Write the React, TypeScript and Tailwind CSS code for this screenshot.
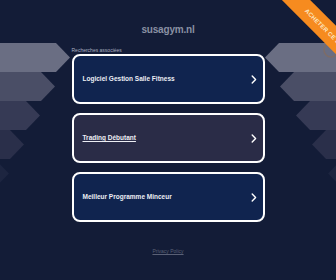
import React from "react";

const Chevron = () => (
  <svg width="6" height="9" viewBox="0 0 6 9" fill="none">
    <path d="M1.2 1 L4.6 4.5 L1.2 8" stroke="#ffffff" strokeWidth="1.4" strokeLinecap="round" strokeLinejoin="round" />
  </svg>
);

const cards = [
  { label: "Logiciel Gestion Salle Fitness", bg: "bg-[#10244f]", underline: false },
  { label: "Trading Débutant", bg: "bg-[#2a2c47]", underline: true },
  { label: "Meilleur Programme Minceur", bg: "bg-[#10244f]", underline: false },
];

export default function App() {
  const leftShapes = [
    { y: 43, tip: 70, c: "#6a6e83" },
    { y: 72, tip: 55, c: "#4a4e66" },
    { y: 101, tip: 40, c: "#363a55" },
    { y: 130, tip: 24, c: "#2a2f4a" },
    { y: 159, tip: 9, c: "#1d2540" },
  ];
  const rightShapes = [
    { y: 43, tip: 265, c: "#6a6e83" },
    { y: 72, tip: 280, c: "#4a4e66" },
    { y: 101, tip: 296, c: "#363a55" },
    { y: 130, tip: 312, c: "#2a2f4a" },
    { y: 159, tip: 328, c: "#1d2540" },
  ];
  const h = 29;
  return (
    <div
      className="relative w-[336px] h-[280px] overflow-hidden bg-[#131c37]"
      style={{ fontFamily: '"Liberation Sans", Arial, sans-serif' }}
    >
      <svg className="absolute left-0 top-0" width="336" height="280" viewBox="0 0 336 280">
        {leftShapes.map((s, i) => (
          <polygon
            key={"l" + i}
            points={`0,${s.y} ${s.tip - 14},${s.y} ${s.tip},${s.y + h / 2} ${s.tip - 14},${s.y + h} 0,${s.y + h}`}
            fill={s.c}
          />
        ))}
        {rightShapes.map((s, i) => (
          <polygon
            key={"r" + i}
            points={`336,${s.y} ${s.tip + 14},${s.y} ${s.tip},${s.y + h / 2} ${s.tip + 14},${s.y + h} 336,${s.y + h}`}
            fill={s.c}
          />
        ))}
        <circle cx="331" cy="50" r="7" fill="none" stroke="#8a6a55" strokeWidth="1.5" opacity="0.6" />
      </svg>

      <div className="absolute left-[220px] top-[14px] w-[200px] h-[20px] rotate-45 bg-[#f68b1f] flex items-center pl-[80px]">
        <span className="text-[6px] font-bold text-[#fde7c2] tracking-[0.2px] whitespace-nowrap leading-none">
          ACHETER CE DOMAINE
        </span>
      </div>

      <div className="relative flex flex-col items-center">
        <div className="mt-[24px] h-[12px] text-[10px] leading-[12px] font-bold text-[#8a90a3] tracking-[-0.2px]">
          susagym.nl
        </div>
        <div className="mt-[10px] w-[193px] h-[8px] text-[5px] leading-[8px] text-[#a9aec0]">
          Recherches associées
        </div>
        <div className="flex flex-col gap-[9px]">
          {cards.map((c) => (
            <div
              key={c.label}
              className={`w-[193px] h-[50px] rounded-[8px] border-2 border-white ${c.bg} flex items-center justify-between pl-[9px] pr-[6px]`}
            >
              <span
                className={`text-[6.5px] font-bold text-[#eceef4] ${c.underline ? "underline" : ""}`}
              >
                {c.label}
              </span>
              <Chevron />
            </div>
          ))}
        </div>
        <div className="mt-[26px] text-[5px] leading-[6px] text-[#5a6076] underline">
          Privacy Policy
        </div>
      </div>
    </div>
  );
}
